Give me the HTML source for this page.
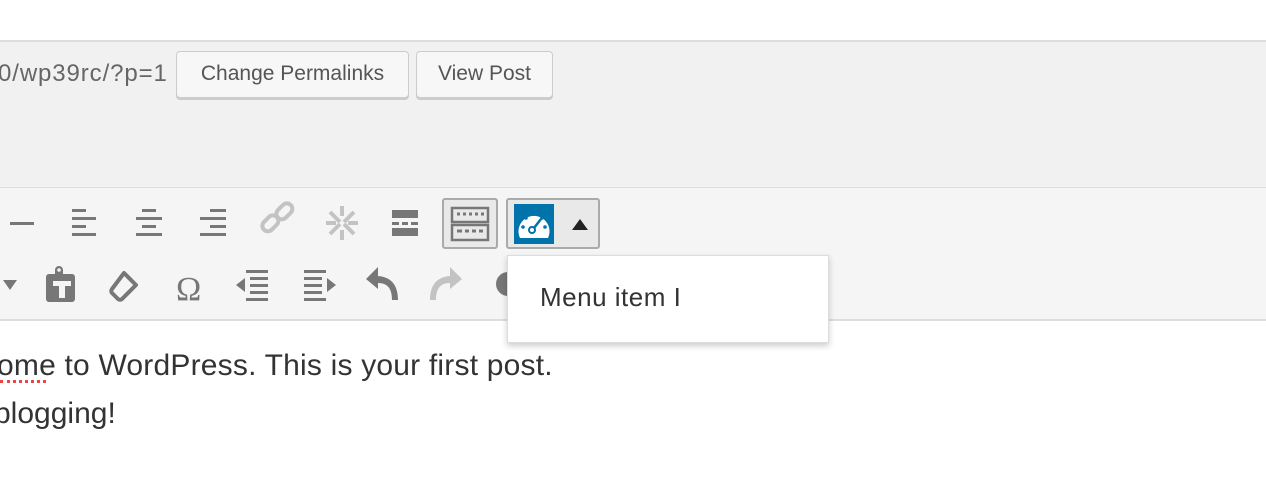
<!DOCTYPE html>
<html><head><meta charset="utf-8"><style>
*{margin:0;padding:0;box-sizing:border-box}
body{width:1266px;height:504px;position:relative;overflow:hidden;background:#fff;font-family:"Liberation Sans",sans-serif}
.a{position:absolute}
.btn{position:absolute;top:51px;height:47px;border:1px solid #ccc;border-radius:4px;background:#f7f7f7;box-shadow:0 2px 0 #ccc;font-size:21px;color:#555;line-height:44px;text-align:center}
svg{position:absolute}
</style></head><body>
<div class="a" style="top:40px;left:0;width:1266px;height:148px;background:#f1f1f1;border-top:2px solid #ddd;border-bottom:1px solid #ddd"></div>
<div class="a" style="top:188px;left:0;width:1266px;height:133px;background:#f5f5f5;border-bottom:2px solid #ddd"></div>
<div class="a" style="top:60px;left:-2px;font-size:24px;color:#666;letter-spacing:0.9px">0/wp39rc/?p=1</div>
<div class="btn" style="left:176px;width:233px">Change Permalinks</div>
<div class="btn" style="left:416px;width:137px">View Post</div>

<!-- row 1 -->
<svg style="left:0;top:196px" width="440" height="60" fill="#777">
<rect x="10" y="26" width="24" height="3"/>
<g><rect x="72" y="13" width="14" height="3"/><rect x="72" y="21" width="24" height="3"/><rect x="72" y="29" width="14" height="3"/><rect x="72" y="37" width="24" height="3"/></g>
<g><rect x="142" y="13" width="14" height="3"/><rect x="136" y="21" width="26" height="3"/><rect x="142" y="29" width="14" height="3"/><rect x="136" y="37" width="26" height="3"/></g>
<g><rect x="210" y="13" width="16" height="3"/><rect x="200" y="21" width="26" height="3"/><rect x="210" y="29" width="16" height="3"/><rect x="200" y="37" width="26" height="3"/></g>
<g fill="none" stroke="#c3c3c3" stroke-width="4"><rect x="261" y="22" width="18" height="11" rx="5.5" transform="rotate(-45 270 27)"/><rect x="275" y="10" width="18" height="11" rx="5.5" transform="rotate(-45 284 15)"/></g>
<g stroke="#c3c3c3" stroke-width="4" fill="none"><path d="M330 16 L340 26 M354 16 L344 26 M330 38 L340 28 M354 38 L344 28 M342 10 V20 M342 34 V44 M326 27 H336 M348 27 H358"/></g>
<rect x="392" y="14" width="26" height="8"/><rect x="392" y="26" width="7" height="3"/><rect x="402" y="26" width="6" height="3"/><rect x="411" y="26" width="7" height="3"/><rect x="392" y="32" width="26" height="8"/>
</svg>
<div class="a" style="left:442px;top:198px;width:56px;height:51px;border:2px solid #aaa;border-radius:3px;background:#e9e9e9"></div>
<svg style="left:449px;top:206px" width="42" height="38" fill="none" stroke="#777" stroke-width="2.5"><rect x="3" y="2" width="36" height="14"/><rect x="3" y="19" width="36" height="15"/><path d="M8 8h3M14 8h3M20 8h3M26 8h3M32 8h3M8 25h5M16 25h4M23 25h4M30 25h4" stroke-width="3"/></svg>
<div class="a" style="left:506px;top:198px;width:94px;height:51px;border:2px solid #aaa;border-radius:3px;background:#e9e9e9"></div>
<div class="a" style="left:514px;top:204px;width:40px;height:40px;background:#0073aa"></div>
<svg style="left:514px;top:204px" width="40" height="40"><path d="M6 34 A15.5 15.5 0 1 1 34 34 Z" fill="#fff"/><g fill="#0073aa"><circle cx="20" cy="10" r="1.8"/><circle cx="12" cy="14" r="1.8"/><circle cx="9" cy="23" r="1.8"/><circle cx="28" cy="14" r="1.8"/><circle cx="31" cy="23" r="1.8"/></g><circle cx="18" cy="26" r="3" fill="none" stroke="#0073aa" stroke-width="2"/><path d="M20 24 L27 15" stroke="#0073aa" stroke-width="2.5"/></svg>
<svg style="left:570px;top:216px" width="20" height="16"><path d="M2 14 L10 3 L18 14Z" fill="#222"/></svg>

<!-- row 2 -->
<svg style="left:0;top:262px" width="520" height="46" fill="#777">
<path d="M3 18 L17 18 L10 28Z"/>
<path d="M46 12 h9 v-4 a4 4 0 0 1 8 0 v4 h9 a3 3 0 0 1 3 3 v22 a3 3 0 0 1 -3 3 h-23 a3 3 0 0 1 -3 -3 v-22 a3 3 0 0 1 3 -3z"/>
<circle cx="59" cy="8" r="1.8" fill="#f5f5f5"/>
<path d="M53 19 h18 v5 h-6 v12 h-6 v-12 h-6z" fill="#f5f5f5"/>
<path d="M124 11 l12 12 l-14 14 a3 3 0 0 1 -4 0 l-6 -6 a3 3 0 0 1 0 -4z" fill="none" stroke="#777" stroke-width="4" stroke-linejoin="round"/>
<text x="176" y="38" font-size="34" font-family="Liberation Serif" fill="#777">Ω</text>
<g><rect x="246" y="8" width="22" height="3"/><rect x="250" y="15" width="18" height="3"/><rect x="250" y="22" width="18" height="3"/><rect x="250" y="29" width="18" height="3"/><rect x="246" y="36" width="22" height="3"/><path d="M236 23 L245 16 V30Z"/></g>
<g><rect x="304" y="8" width="22" height="3"/><rect x="304" y="15" width="18" height="3"/><rect x="304" y="22" width="18" height="3"/><rect x="304" y="29" width="18" height="3"/><rect x="304" y="36" width="22" height="3"/><path d="M336 23 L327 16 V30Z"/></g>
<path d="M378 5 L366 17 L378 27 V21 C388 21 392 27 392 38 L398 38 C398 24 392 15 378 14Z"/>
<path d="M450 5 L462 17 L450 27 V21 C440 21 436 27 436 38 L430 38 C430 24 436 15 450 14Z" fill="#c3c3c3"/>
<circle cx="508" cy="22" r="12"/>
</svg>

<div class="a" style="left:507px;top:255px;width:322px;height:88px;background:#fff;border:1px solid #ddd;box-shadow:0 3px 6px rgba(0,0,0,.2)"></div>
<div class="a" style="left:540px;top:282px;font-size:26px;color:#333;letter-spacing:0.5px">Menu item I</div>

<div class="a" style="left:-3px;top:349px;font-size:30px;color:#333;white-space:nowrap;letter-spacing:0.2px">ome to WordPress. This is your first post.</div>
<div class="a" style="left:-6px;top:397px;font-size:30px;color:#333">blogging!</div>
<div class="a" style="left:0;top:380px;width:46px;border-top:3px dotted #e44"></div>
</body></html>
